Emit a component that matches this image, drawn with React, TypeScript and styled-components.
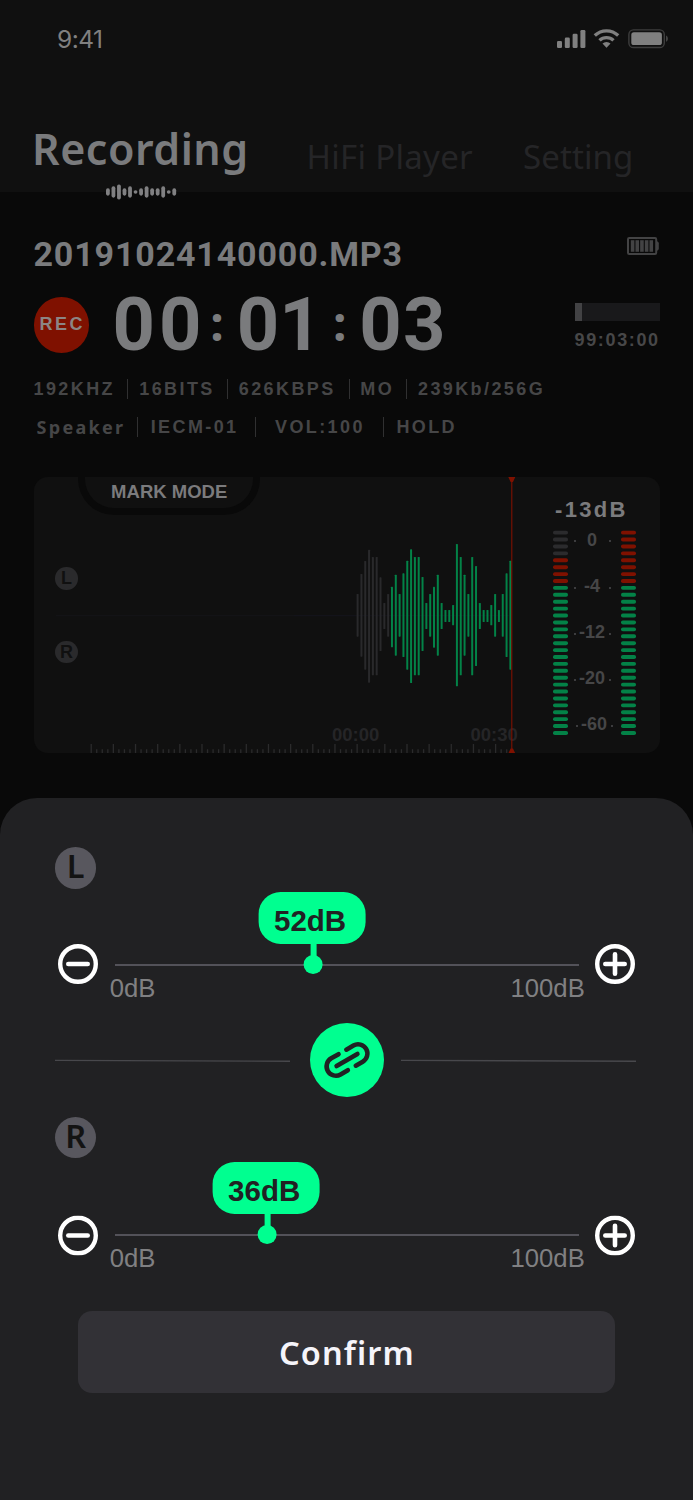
import React from "react";
import styled, { createGlobalStyle } from "styled-components";

const sans = '"Liberation Sans", Arial, sans-serif';
const numeric = 'Roboto, "Liberation Sans", sans-serif';
const human = '"Noto Sans", "Open Sans", sans-serif';
const GREEN = "#00ff90";
const DIM_GREEN = "#038247";
const DIM_RED = "#7f1100";

const GlobalStyle = createGlobalStyle`
  * { box-sizing: border-box; }
  body { margin: 0; background: #090909; }
`;

const Screen = styled.div`
  display: flex;
  flex-direction: column;
  width: 693px;
  height: 1500px;
  overflow: hidden;
  background: #090909;
  font-family: ${sans};
`;

const Header = styled.header`
  height: 192px;
  background: #101010;
`;

const StatusBar = styled.div`
  display: flex;
  align-items: center;
  justify-content: space-between;
  height: 78px;
  padding: 0 25px 0 57px;
`;

const Clock = styled.span`
  font: 400 24.5px/30px Inter, sans-serif;
  letter-spacing: -0.5px;
  color: #808080;
`;

const Tabs = styled.nav`
  display: flex;
  align-items: flex-start;
  padding-left: 32px;
`;

const Tab = styled.div<{ $active?: boolean; $width: number; $spacing: number }>`
  display: flex;
  flex-direction: column;
  width: ${(p) => p.$width}px;
  padding-top: ${(p) => (p.$active ? 46 : 54)}px;
  font-family: ${human};
  font-size: ${(p) => (p.$active ? 43 : 33)}px;
  font-weight: ${(p) => (p.$active ? 600 : 400)};
  line-height: 50px;
  letter-spacing: ${(p) => p.$spacing}px;
  white-space: nowrap;
  color: ${(p) => (p.$active ? "#7a7b7d" : "#252527")};
`;

const TabMark = styled.svg`
  display: block;
  flex: none;
  margin: 10px 0 0 73px;
`;

const Info = styled.section`
  display: flex;
  flex-direction: column;
  padding: 42px 33.5px 0;
`;

const TitleRow = styled.div`
  display: flex;
  justify-content: space-between;
  align-items: flex-start;
  height: 40px;
`;

const FileName = styled.h1`
  margin: 0;
  font-family: ${numeric};
  font-size: 34px;
  font-weight: 700;
  line-height: 40px;
  letter-spacing: 0.85px;
  color: #7a7b7d;
`;

const BatteryIcon = styled.svg`
  display: block;
  margin-top: 3px;
`;

const TimerRow = styled.div`
  display: flex;
  align-items: center;
  height: 70px;
  margin-top: 16px;
`;

const RecBadge = styled.div`
  display: flex;
  align-items: center;
  justify-content: center;
  width: 55.4px;
  height: 55.4px;
  border-radius: 50%;
  padding: 0 0 2px 2px;
  background: ${DIM_RED};
  color: #8c8584;
  font-size: 18px;
  font-weight: 700;
  line-height: 20px;
  letter-spacing: 2.4px;
`;

const Timer = styled.div`
  display: grid;
  grid-template-columns: 94.7px 29.7px 93px 29.5px 92px;
  align-items: center;
  margin-left: 23.5px;
  color: #7a7b7d;
`;

const Digits = styled.span<{ $spacing: number }>`
  font-family: ${numeric};
  font-size: 74px;
  font-weight: 700;
  line-height: 70px;
  letter-spacing: ${(p) => p.$spacing}px;
`;

const Colon = styled.span`
  width: 20px;
  text-align: center;
  font: 700 48px/65px ${human};
  padding-bottom: 5px;
`;

const Capacity = styled.div`
  display: flex;
  flex-direction: column;
  gap: 9px;
  width: 85px;
  margin-left: auto;
  padding-top: 3px;
`;

const CapacityBar = styled.div`
  height: 18.6px;
  background: #19191b;
`;

const CapacityFill = styled.div`
  width: 9%;
  height: 100%;
  background: #424244;
`;

const CapacityText = styled.span`
  font-size: 18px;
  font-weight: 700;
  line-height: 20px;
  letter-spacing: 1.65px;
  white-space: nowrap;
  color: #474748;
`;

const MetaRow = styled.div<{ $top: number; $left?: number }>`
  display: flex;
  height: 20px;
  margin-top: ${(p) => p.$top}px;
  padding-left: ${(p) => p.$left ?? 0}px;
`;

const MetaItem = styled.span<{ $width: number; $human?: boolean }>`
  width: ${(p) => p.$width}px;
  font-family: ${(p) => (p.$human ? human : sans)};
  font-size: 18px;
  font-weight: 700;
  line-height: 20px;
  letter-spacing: ${(p) => (p.$human ? 2.3 : 2.4)}px;
  white-space: nowrap;
  color: #464647;
`;

const MetaDivider = styled.i<{ $lead: number }>`
  flex: none;
  width: 1px;
  height: 20px;
  margin-right: ${(p) => p.$lead - 1}px;
  background: #303031;
`;

const Card = styled.section`
  display: flex;
  position: relative;
  width: 626px;
  height: 276.5px;
  margin: 39.5px 0 0 33.5px;
  border-radius: 14px;
  overflow: hidden;
  background: #101010;
`;

const WavePane = styled.div`
  display: grid;
  width: 519.5px;
  height: 276.5px;

  > * { grid-area: 1 / 1; }
`;

const MarkTab = styled.div`
  width: 182px;
  height: 38.3px;
  margin-left: 44.7px;
  border: solid #090909;
  border-width: 0 7px 7px;
  border-radius: 0 0 36px 36px;
  background: #101010;
  text-align: center;
  font-size: 18.5px;
  font-weight: 700;
  line-height: 30px;
  color: #7b7b7d;
`;

const SmallBadge = styled.div<{ $top: number }>`
  display: flex;
  align-items: center;
  justify-content: center;
  width: 22.6px;
  height: 22.6px;
  margin: ${(p) => p.$top}px 0 0 21.7px;
  border-radius: 50%;
  background: #2a2a2c;
  color: #101010;
  font-size: 18px;
  font-weight: 700;
  line-height: 22px;
`;

const MeterPane = styled.div`
  width: 83px;
  padding-top: 21px;
`;

const MeterValue = styled.div`
  margin-left: 2px;
  font-size: 22px;
  font-weight: 700;
  line-height: 24px;
  letter-spacing: 2.3px;
  white-space: nowrap;
  color: #7b7b7d;
`;

const Meter = styled.div`
  display: grid;
  grid-template-columns: 15px 53px 15px;
  margin-top: 8px;

  svg { display: block; }
`;

const Scale = styled.div`
  display: flex;
  flex-direction: column;
  gap: 26.1px;
`;

const ScaleRow = styled.div<{ $shift?: number }>`
  display: grid;
  grid-template-columns: 2px 33px 2px;
  align-items: center;
  margin-left: ${(p) => 5.5 + (p.$shift ?? 0)}px;
  height: 20px;
  text-align: center;
  white-space: nowrap;
  font-size: 18px;
  font-weight: 700;
  line-height: 20px;
  color: #464647;
`;

const ScaleDot = styled.i`
  width: 2px;
  height: 2px;
  margin-top: 3px;
  background: #3c3c3e;
`;

const Sheet = styled.section`
  height: 702px;
  margin-top: auto;
  padding-top: 49.4px;
  border-radius: 37px 37px 0 0;
  background: #212123;
`;

const Channel = styled.div`
  height: 155px;
`;

const Badge = styled.div`
  width: 41.3px;
  height: 41.3px;
  margin-left: 55px;
  border-radius: 50%;
  background: #58575e;
  color: #131313;
  font: 600 32.5px/37px ${human};
  text-align: center;
`;

const SliderRow = styled.div`
  display: flex;
  align-items: center;
  height: 40px;
  margin-top: 55.7px;
  padding-left: 57.7px;
`;

const RoundButton = styled.button<{ $drop: number }>`
  flex: none;
  width: 40px;
  height: 40px;
  margin: 0;
  padding: 0;
  border: 0;
  background: none;
  transform: translateY(${(p) => p.$drop}px);

  svg { display: block; }
`;

const Track = styled.div`
  position: relative;
  width: 464.3px;
  height: 2px;
  margin: 1.5px 16.3px 0 17px;
  background: #535259;
`;

const Marker = styled.div`
  position: absolute;
  bottom: -8px;
  display: flex;
  flex-direction: column;
  align-items: center;
  transform: translateX(-50%);
`;

const Bubble = styled.div`
  width: 107.4px;
  height: 52px;
  border-radius: 22px;
  padding-right: 4px;
  background: ${GREEN};
  color: #212123;
  text-align: center;
  font-size: 29.5px;
  font-weight: 700;
  line-height: 57px;
  margin-left: -2.6px;
`;

const Stem = styled.div`
  width: 5.6px;
  height: 12px;
  background: ${GREEN};
`;

const Knob = styled.div`
  width: 18.8px;
  height: 18.8px;
  margin-top: -1px;
  border-radius: 50%;
  background: ${GREEN};
`;

const RangeLabels = styled.div`
  display: flex;
  justify-content: space-between;
  width: 475px;
  margin: -10px 0 0 109.8px;
  font-size: 25.7px;
  line-height: 28px;
  color: #808082;
`;

const LinkRow = styled.div`
  display: flex;
  align-items: center;
  justify-content: space-between;
  height: 74px;
  margin: 20.8px 57px 19.8px 55px;
`;

const LinkButton = styled.button`
  display: flex;
  align-items: center;
  justify-content: center;
  width: 74px;
  height: 74px;
  margin-left: 2.5px;
  padding: 0;
  border: 0;
  border-radius: 50%;
  background: ${GREEN};
`;

const Confirm = styled.button`
  display: block;
  width: 537.3px;
  height: 82px;
  margin: 39.2px 0 0 77.7px;
  padding: 2px 0 0 1px;
  border: 0;
  border-radius: 14px;
  background: #323136;
  color: #f5f4fa;
  font: 600 32.5px/80px ${human};
  letter-spacing: 1.1px;
  text-align: center;
`;

const markHeights = [7.3, 11.3, 15, 7.3, 11.3, 3.7, 7.3, 11.3, 7.3, 7.3, 11.3, 3.7, 7.3];

/* Top and bottom of each bar in thirds of a pixel, from the start of the audible part. */
const pastBars: [number, number][] = [
  [192, 320], [132, 380], [93, 419], [59, 458], [81, 436], [81, 436], [142, 363], [219, 297], [192, 320],
];
const liveBars: [number, number][] = [
  [170, 352], [134, 377], [192, 320], [130, 381], [92, 419], [58, 459], [81, 436], [81, 436],
  [141, 363], [219, 297], [192, 320], [170, 353], [134, 377], [219, 297], [240, 276], [240, 276],
  [225, 286], [42, 469], [81, 436], [134, 377], [192, 320], [81, 436], [108, 408], [219, 297],
  [240, 276], [240, 276], [225, 286], [192, 320], [240, 276], [192, 320], [130, 381], [92, 419],
];

const ticks = Array.from({ length: 76 }, (_, i) => ({
  x: 57.2 + i * 5.54,
  major: i <= 48 ? i % 4 === 0 : i >= 53 && (i - 53) % 4 === 0,
}));

function Waveform() {
  return (
    <svg width="519.5" height="276.5" viewBox="0 0 519.5 276.5">
      <path d="M22 138.7H310" stroke="#141418" />
      <path d="M260 138.7H475" stroke="#14141c" />
      {[...pastBars, ...liveBars].map(([top, bottom], i) => (
        <rect
          key={i}
          x={322.6 + i * 3.82}
          y={53 + top / 3}
          width="2"
          height={(bottom - top) / 3}
          rx="0.6"
          fill={i < pastBars.length ? "#29292b" : DIM_GREEN}
        />
      ))}
      {ticks.map((t) => (
        <path key={t.x} d={`M${t.x} ${t.major ? 267 : 272.2}V276.5`} stroke="#2b2b2c" strokeWidth="1.3" />
      ))}
      <g fill="#252527" fontFamily="Liberation Sans, Arial, sans-serif" fontSize="18.5" fontWeight="700">
        <text x="298" y="263.6">00:00</text>
        <text x="436.5" y="263.6">00:30</text>
      </g>
      <path d="M477.8 0V276.5" stroke={DIM_RED} strokeWidth="1.1" />
      <path d="M474.3 0h7l-2.3 5h-2.4zM474.3 276.5h7l-2.3-5h-2.4z" fill={DIM_RED} />
    </svg>
  );
}

function MeterBars({ off }: { off: number }) {
  return (
    <svg width="15" height="207" viewBox="0 0 15 207">
      {Array.from({ length: 30 }, (_, i) => (
        <rect
          key={i}
          y={0.7 + i * 6.908}
          width="15"
          height="3.9"
          rx="1.8"
          fill={i < off ? "#2b2b2d" : i < 8 ? DIM_RED : DIM_GREEN}
        />
      ))}
    </svg>
  );
}

function StepIcon({ plus }: { plus?: boolean }) {
  return (
    <svg width="40" height="40" viewBox="0 0 40 40" fill="none" stroke="#fff" strokeLinecap="round">
      <circle cx="20" cy="20" r="17.8" strokeWidth="4.4" />
      <path d={plus ? "M10.3 20h19.4M20 10.3v19.4" : "M10.3 20h19.4"} strokeWidth="4.6" />
    </svg>
  );
}

function DividerLine() {
  return (
    <svg width="235" height="4" viewBox="0 0 235 4">
      <path d="M0 2.4L235 3.3" stroke="#48484c" strokeWidth="1.4" />
    </svg>
  );
}

function ChannelControl({ name, value, at, drop }: { name: string; value: number; at: number; drop: number }) {
  return (
    <Channel>
      <Badge>{name}</Badge>
      <SliderRow>
        <RoundButton $drop={drop} aria-label="Decrease"><StepIcon /></RoundButton>
        <Track>
          <Marker style={{ left: `${at}%` }}>
            <Bubble>{value}dB</Bubble>
            <Stem />
            <Knob />
          </Marker>
        </Track>
        <RoundButton $drop={drop} aria-label="Increase"><StepIcon plus /></RoundButton>
      </SliderRow>
      <RangeLabels>
        <span>0dB</span>
        <span>100dB</span>
      </RangeLabels>
    </Channel>
  );
}

export default function App() {
  return (
    <Screen>
      <GlobalStyle />
      <Header>
        <StatusBar>
          <Clock>9:41</Clock>
          <svg width="111" height="20" viewBox="0 0 111 20" fill="#808080">
            <rect x="0" y="12" width="5" height="7" rx="1.3" />
            <rect x="7.8" y="8.6" width="5" height="10.4" rx="1.3" />
            <rect x="15.6" y="4.8" width="5" height="14.2" rx="1.3" />
            <rect x="23.4" y="1" width="5" height="18" rx="1.3" />
            <path d="M49.2 18.6l-3.7-4.1a5.8 5.8 0 0 1 8 0l-3.7 4.1q-.3.3-.6 0z" />
            <g fill="none" stroke="#808080" strokeWidth="3.3">
              <path d="M42.5 11.4a10.1 10.1 0 0 1 14 0" />
              <path d="M37.8 6.5a16.9 16.9 0 0 1 23.4 0" />
            </g>
            <rect x="71.9" y="0.9" width="35.4" height="17.6" rx="4.6" fill="none" stroke="#3d3d3d" strokeWidth="1.4" />
            <rect x="74.3" y="3.2" width="30.6" height="12.8" rx="2.6" />
            <path d="M109 6.6c2.6 1.2 2.6 5 0 6.2z" fill="#434343" />
          </svg>
        </StatusBar>
        <Tabs>
          <Tab $active $width={274.5} $spacing={0.5}>
            Recording
            <TabMark width="72" height="16" viewBox="0 0 72 16">
              {markHeights.map((h, i) => (
                <rect key={i} x={1 + i * 5.53} y={8 - h / 2} width="3.8" height={h} rx="1.8" fill="#808082" />
              ))}
            </TabMark>
          </Tab>
          <Tab $width={216.5} $spacing={0.3}>HiFi Player</Tab>
          <Tab $width={120} $spacing={0.1}>Setting</Tab>
        </Tabs>
      </Header>

      <Info>
        <TitleRow>
          <FileName>20191024140000.MP3</FileName>
          <BatteryIcon width="33" height="18" viewBox="0 0 33 18">
            <rect x="1" y="1" width="28.2" height="16" rx="1.2" fill="none" stroke="#434344" strokeWidth="2" />
            <path d="M30 4.3q1.8.3 1.8 2v5.4q0 1.7-1.8 2z" fill="#434344" />
            {[0, 1, 2, 3, 4].map((i) => (
              <rect key={i} x={3.8 + i * 4.67} y="3.2" width="3.6" height="11.6" fill="#434344" />
            ))}
          </BatteryIcon>
        </TitleRow>
        <TimerRow>
          <RecBadge>REC</RecBadge>
          <Timer>
            <Digits $spacing={4.2}>00</Digits>
            <Colon>:</Colon>
            <Digits $spacing={0}>01</Digits>
            <Colon>:</Colon>
            <Digits $spacing={1.2}>03</Digits>
          </Timer>
          <Capacity>
            <CapacityBar><CapacityFill /></CapacityBar>
            <CapacityText>99:03:00</CapacityText>
          </Capacity>
        </TimerRow>
        <MetaRow $top={18.8}>
          <MetaItem $width={93.8}>192KHZ</MetaItem>
          <MetaDivider $lead={12} />
          <MetaItem $width={88}>16BITS</MetaItem>
          <MetaDivider $lead={11.5} />
          <MetaItem $width={110.2}>626KBPS</MetaItem>
          <MetaDivider $lead={11.3} />
          <MetaItem $width={46}>MO</MetaItem>
          <MetaDivider $lead={11.7} />
          <MetaItem $width={130}>239Kb/256G</MetaItem>
        </MetaRow>
        <MetaRow $top={18.7} $left={3}>
          <MetaItem $width={100.2} $human>Speaker</MetaItem>
          <MetaDivider $lead={14} />
          <MetaItem $width={104}>IECM-01</MetaItem>
          <MetaDivider $lead={20.3} />
          <MetaItem $width={108.5}>VOL:100</MetaItem>
          <MetaDivider $lead={12.9} />
          <MetaItem $width={70}>HOLD</MetaItem>
        </MetaRow>
      </Info>

      <Card>
        <WavePane>
          <Waveform />
          <MarkTab>MARK MODE</MarkTab>
          <SmallBadge $top={90}>L</SmallBadge>
          <SmallBadge $top={163.8}>R</SmallBadge>
        </WavePane>
        <MeterPane>
          <MeterValue>-13dB</MeterValue>
          <Meter>
            <MeterBars off={4} />
            <Scale>
              {["0", "-4", "-12", "-20", "-60"].map((label) => (
                <ScaleRow key={label} $shift={label === "-60" ? 2 : 0}>
                  <ScaleDot />
                  <span>{label}</span>
                  <ScaleDot />
                </ScaleRow>
              ))}
            </Scale>
            <MeterBars off={0} />
          </Meter>
        </MeterPane>
      </Card>

      <Sheet>
        <ChannelControl name="L" value={52} at={42.8} drop={0} />
        <LinkRow>
          <DividerLine />
          <LinkButton aria-label="Link channels">
            <svg width="54" height="54" viewBox="-27 -27 54 54" fill="none" stroke="#212123" strokeWidth="4.6" strokeLinecap="round">
              <g transform="rotate(-30)">
                <path d="M-12 0H12" />
                <path d="M-4.4-9.3H-12.8a9.3 9.3 0 0 0 0 18.6H-4.4" />
                <path d="M4.6-9.3H12.8a9.3 9.3 0 0 1 0 18.6H4.8" />
              </g>
            </svg>
          </LinkButton>
          <DividerLine />
        </LinkRow>
        <ChannelControl name="R" value={36} at={32.9} drop={1.5} />
        <Confirm>Confirm</Confirm>
      </Sheet>
    </Screen>
  );
}
